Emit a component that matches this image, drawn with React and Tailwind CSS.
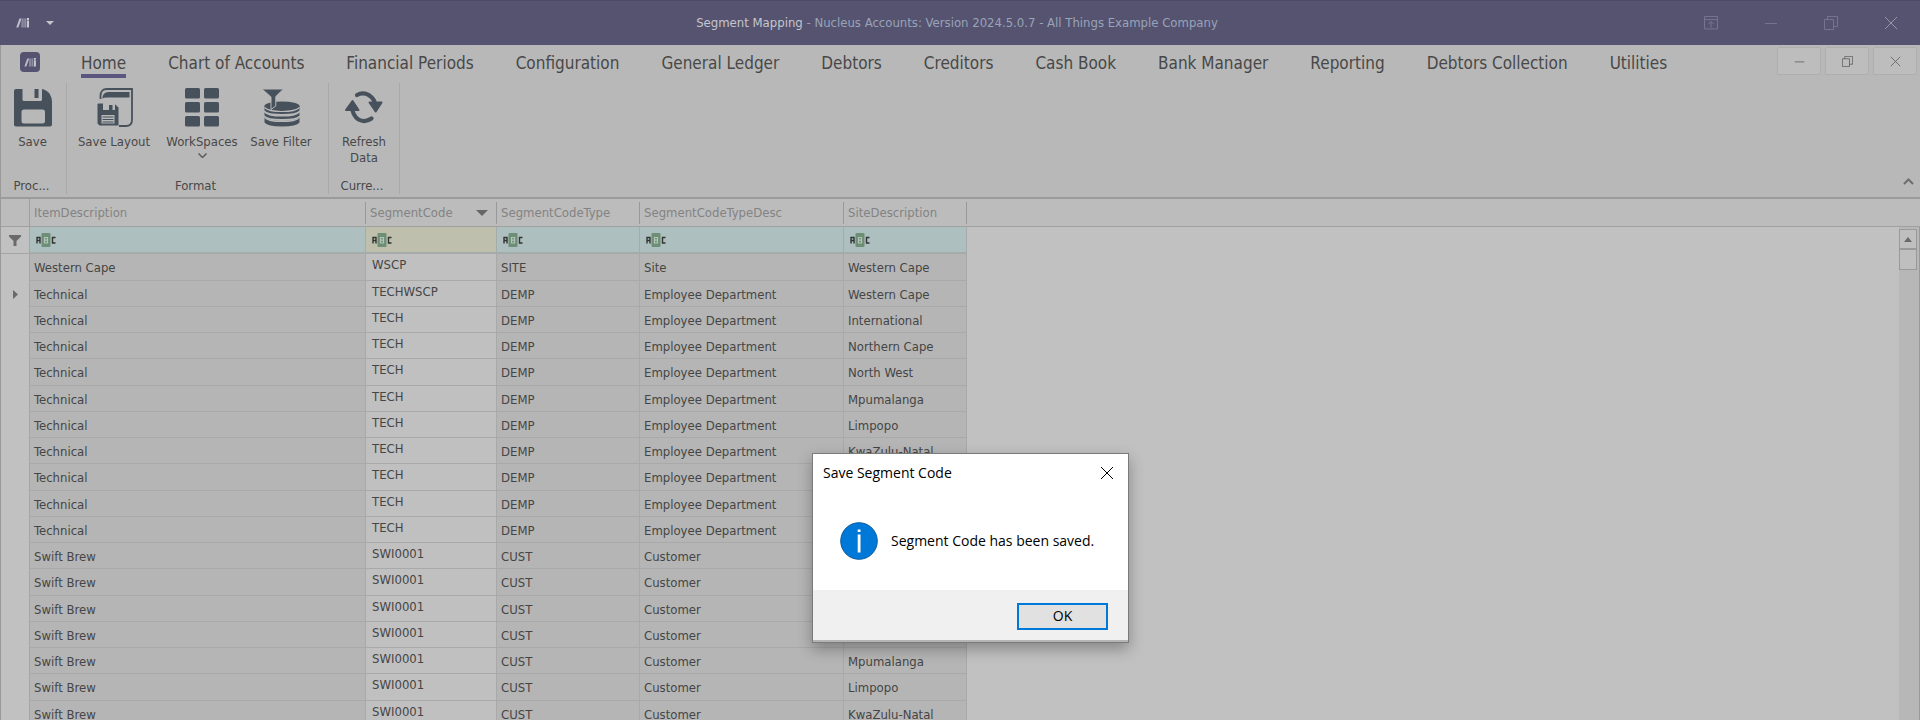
import React from "react";

const TABS = [
  "Home",
  "Chart of Accounts",
  "Financial Periods",
  "Configuration",
  "General Ledger",
  "Debtors",
  "Creditors",
  "Cash Book",
  "Bank Manager",
  "Reporting",
  "Debtors Collection",
  "Utilities",
];

const COLUMNS = [
  "ItemDescription",
  "SegmentCode",
  "SegmentCodeType",
  "SegmentCodeTypeDesc",
  "SiteDescription",
];

const SITES = [
  "Western Cape",
  "International",
  "Northern Cape",
  "North West",
  "Mpumalanga",
  "Limpopo",
  "KwaZulu-Natal",
  "Gauteng",
  "Free State",
  "Eastern Cape",
];

const ROWS = [
  ["Western Cape", "WSCP", "SITE", "Site", "Western Cape"],
  ...SITES.map((site, i) => [
    "Technical",
    i === 0 ? "TECHWSCP" : "TECH",
    "DEMP",
    "Employee Department",
    site,
  ]),
  ...SITES.slice(0, 7).map((site) => ["Swift Brew", "SWI0001", "CUST", "Customer", site]),
];

function Mark({ className }) {
  return (
    <svg className={className} viewBox="0 0 14 10" aria-hidden="true">
      <path d="M3.4 0.500h2.200L2.400 9.500H0.200z" fill="#bdbdc8" />
      <path d="M5.600 0.500h2.200v9H5.200z" fill="#8a889e" />
      <path d="M8.200 0.500h1.800v9H8.200z" fill="#8f8da2" />
      <path d="M10.800 0h2.200v2h-2.200zM10.800 2.500h2.200v7h-2.200z" fill="#c9c9d2" />
    </svg>
  );
}

function SaveIcon() {
  return (
    <svg className="h-[39px] w-[38px]" viewBox="0 0 38 39" fill="#47515c" aria-hidden="true">
      <path
        fillRule="evenodd"
        d="M2 1h6.5v10.5q0 1.5 1.5 1.5h16.500q1.500 0 1.500-1.500V1q4 0.500 7.500 4.500Q38 9.500 38 14v22.500q0 2-2 2H2q-2 0-2-2V3q0-2 2-2zM10 21.500q-2.500 0-2.500 2.500v9q0 2.500 2.500 2.500h18.500q2.500 0 2.500-2.500v-9q0-2.500-2.500-2.500z"
      />
      <rect x="20.500" y="1" width="4" height="9" />
    </svg>
  );
}

function SaveLayoutIcon() {
  return (
    <svg className="h-[39px] w-[38px]" viewBox="-2 0 38 39" aria-hidden="true">
      <path
        d="M3.500 11V8Q3.500 1 10 1H35V32q0 6-6 6H22"
        fill="none"
        stroke="#47515c"
        strokeWidth="1.800"
      />
      <path d="M5.500 10.500q0-6.500 6-6.500H32.500V9.500H9.500Q7 9.500 5.500 10.500z" fill="#47515c" />
      <path
        fillRule="evenodd"
        d="M1.500 15.500H6v6.500h12v-5.800l3.500 3.300V37.500H2.500L0.500 35.500V16zM4.500 27v8.500h13V27z"
        fill="#47515c"
      />
      <path d="M12 17h3.500v5H12z" fill="#47515c" />
      <path d="M5.500 29h11M5.500 31.500h11M5.500 34h11" stroke="#47515c" strokeWidth="1.200" />
    </svg>
  );
}

function WorkspacesIcon() {
  return (
    <svg className="h-[39px] w-[38px]" viewBox="0 0 38 39" fill="#47515c" aria-hidden="true">
      {[0, 14, 28].map((y) => (
        <g key={y}>
          <rect x="2" y={y} width="15" height="10.500" rx="1.500" />
          <rect x="21" y={y} width="15" height="10.500" rx="1.500" />
        </g>
      ))}
    </svg>
  );
}

function SaveFilterIcon() {
  return (
    <svg className="h-[39px] w-[38px]" viewBox="0 0 38 39" aria-hidden="true">
      <g fill="#47515c">
        <ellipse cx="20" cy="18" rx="17.500" ry="4.500" />
        <path d="M2.500 18h35v4.500q-3 3.500-17.500 3.500T2.500 22.500z" />
        <path d="M2.500 24q4 4 17.500 4t17.500-4v3.500q-3 3.500-17.500 3.500T2.500 27.500z" />
        <path d="M2.500 29q4 4 17.500 4t17.500-4v5.500q-3 4-17.500 4t-17.500-4z" />
      </g>
      <path
        d="M2.500 19.500q4 4 17.500 4t17.500-4M2.500 24q4 4 17.500 4t17.500-4M2.500 29.500q4 4 17.500 4t17.500-4"
        fill="none"
        stroke="#b8b8b8"
        strokeWidth="1.200"
      />
      <path
        d="M0 1h21.500L13.800 8.500V18L9 21.500V9z"
        fill="#47515c"
        stroke="#b8b8b8"
        strokeWidth="1"
      />
    </svg>
  );
}

function RefreshIcon() {
  return (
    <svg className="h-[39px] w-[38px]" viewBox="0 0 38 39" aria-hidden="true">
      <g fill="none" stroke="#47515c" strokeWidth="4.200" strokeLinecap="round">
        <path d="M12 7Q18 3.800 24 7.200Q30 11 30.500 18" />
        <path d="M26.500 30.500Q20 35 13.500 31.500Q7.500 27.500 7 19" />
      </g>
      <path
        d="M24.500 14.500h12l-5.800 9zM1 22l6.500-9 6 9z"
        fill="#47515c"
        stroke="#47515c"
        strokeWidth="2"
        strokeLinejoin="round"
      />
    </svg>
  );
}

function RibbonButton({ icon, children, className }) {
  return (
    <button type="button" className={`flex flex-col items-center ${className}`}>
      {icon}
      <span className="mt-[7px] block text-center">{children}</span>
    </button>
  );
}

function RibbonGroup({ label, className, children }) {
  return (
    <section
      className={`flex h-[111px] flex-col border-r border-[#a9a9a9] ${className}`}
      aria-label={label}
    >
      <div className="flex flex-1 items-start pt-[5px]">{children}</div>
      <div className="pr-1 text-center">{label}</div>
    </section>
  );
}

function MinimizeGlyph({ className }) {
  return (
    <svg className={className} viewBox="0 0 14 14" fill="none" stroke="currentColor" aria-hidden="true">
      <path d="M1 7.500h12" />
    </svg>
  );
}

function RestoreGlyph({ className }) {
  return (
    <svg className={className} viewBox="0 0 14 14" fill="none" stroke="currentColor" aria-hidden="true">
      <path d="M0.500 3.500h9v10h-9zM3.500 3.500v-3h10v10h-4" />
    </svg>
  );
}

function CloseGlyph({ className }) {
  return (
    <svg className={className} viewBox="0 0 14 14" fill="none" stroke="currentColor" aria-hidden="true">
      <path d="M1 1l12 12M13 1L1 13" />
    </svg>
  );
}

function TitleBar() {
  return (
    <header className="flex h-[45px] shrink-0 items-center border-t border-[#4c4a62] bg-[#555370] text-[#76748c]">
      <div className="flex flex-1 items-center gap-4 pl-4">
        <Mark className="h-[10px] w-[14px]" />
        <button type="button" aria-label="Customise quick access toolbar">
          <svg className="h-1 w-2" viewBox="0 0 8 4" fill="#c4c4cc" aria-hidden="true">
            <path d="M0 0h8L4 4z" />
          </svg>
        </button>
      </div>
      <h1 className="text-[13px] text-[#98a3b8]">
        <span className="text-[#c6c6cc]">Segment Mapping</span> - Nucleus Accounts: Version
        2024.5.0.7 - All Things Example Company
      </h1>
      <div className="flex flex-1 items-center justify-end gap-[46px] pr-[22px]">
        <button type="button" aria-label="Ribbon display options">
          <svg
            className="block size-[14px]"
            viewBox="0 0 14 14"
            fill="none"
            stroke="currentColor"
            aria-hidden="true"
          >
            <path d="M0.500 0.500h13v12.500h-13zM0.500 3.500h13M7 12V5.500M4.500 8L7 5.500 9.500 8" />
          </svg>
        </button>
        <button type="button" aria-label="Minimize">
          <MinimizeGlyph className="block size-[14px]" />
        </button>
        <button type="button" aria-label="Restore">
          <RestoreGlyph className="block size-[14px]" />
        </button>
        <button type="button" aria-label="Close" className="text-[#9897a6]">
          <CloseGlyph className="block size-[14px]" />
        </button>
      </div>
    </header>
  );
}

function TabBar() {
  const child =
    "flex h-[28px] w-[44px] items-center justify-center rounded-[2px] border border-[#aeaeae] bg-[#bdbdbd] text-[#5c5c5c]";
  return (
    <nav className="flex h-[38px] shrink-0 items-start" aria-label="Ribbon tabs">
      <button
        type="button"
        aria-label="Application menu"
        className="mt-[7px] mr-[41px] ml-[19px] flex size-5 items-center justify-center rounded-[4px] bg-[#555370]"
      >
        <Mark className="h-[9px] w-[13px]" />
      </button>
      <div className="flex gap-[42px] text-[17px] leading-[20px]">
        {TABS.map((tab, i) => (
          <a
            key={tab}
            href="#"
            aria-current={i === 0 ? "page" : undefined}
            className={`mt-2 border-b-4 pb-px whitespace-nowrap ${
              i === 0 ? "border-[#5b5680]" : "border-transparent"
            }`}
          >
            {tab}
          </a>
        ))}
      </div>
      <div className="mt-[2px] ml-auto flex gap-1 pr-[3px]">
        <button type="button" aria-label="Minimize document" className={child}>
          <MinimizeGlyph className="size-[11px]" />
        </button>
        <button type="button" aria-label="Restore document" className={child}>
          <RestoreGlyph className="size-[11px]" />
        </button>
        <button type="button" aria-label="Close document" className={child}>
          <CloseGlyph className="size-[11px]" />
        </button>
      </div>
    </nav>
  );
}

function Ribbon() {
  return (
    <div className="flex h-[116px] shrink-0 items-start border-b-2 border-[#9b9b9b] text-[13px] leading-[16px]">
      <RibbonGroup label="Proc..." className="w-[66px]">
        <RibbonButton className="w-[63px]" icon={<SaveIcon />}>
          Save
        </RibbonButton>
      </RibbonGroup>
      <RibbonGroup label="Format" className="w-[262px]">
        <RibbonButton className="ml-[3px] w-[88px]" icon={<SaveLayoutIcon />}>
          Save Layout
        </RibbonButton>
        <RibbonButton className="w-[88px]" icon={<WorkspacesIcon />}>
          WorkSpaces
          <svg
            className="mx-auto mt-[3px] h-[5px] w-[9px]"
            viewBox="0 0 9 5"
            fill="none"
            stroke="#5c5c5c"
            strokeWidth="1.500"
            aria-hidden="true"
          >
            <path d="M0.500 0.500l4 4 4-4" />
          </svg>
        </RibbonButton>
        <RibbonButton className="w-[70px]" icon={<SaveFilterIcon />}>
          Save Filter
        </RibbonButton>
      </RibbonGroup>
      <RibbonGroup label="Curre..." className="w-[71px]">
        <RibbonButton className="w-[70px]" icon={<RefreshIcon />}>
          Refresh
          <br />
          Data
        </RibbonButton>
      </RibbonGroup>
      <button type="button" aria-label="Collapse ribbon" className="mr-[6px] mb-[12px] ml-auto self-end">
        <svg
          className="block h-[7px] w-[11px]"
          viewBox="0 0 11 7"
          fill="none"
          stroke="#6e6e6e"
          strokeWidth="2"
          aria-hidden="true"
        >
          <path d="M1 6l4.500-4.500L10 6" />
        </svg>
      </button>
    </div>
  );
}

function ContainsBadge() {
  return (
    <svg className="h-[14px] w-5" viewBox="0 0 20 14" fill="none" aria-hidden="true">
      <path d="M1 10.500V4.500h3v6M1 7.500h3" stroke="#333" strokeWidth="1.400" />
      <rect x="5.500" y="0" width="9" height="14" rx="1" fill="#6d8f76" />
      <path d="M8.500 4.500h3v5.500h-3zM8.500 7.200h3" stroke="#b4c4b8" strokeWidth="1.200" />
      <path d="M19.500 4.500h-3v5.500h3" stroke="#333" strokeWidth="1.400" />
    </svg>
  );
}

function Grid() {
  return (
    <div className="flex min-h-0 flex-1 bg-[linear-gradient(#bcbcbc_27px,#a0a0a0_27px,#a0a0a0_28px,#c1c1c1_28px)]">
      <div className="min-w-0 flex-1 overflow-hidden">
        <table className="w-[966px] table-fixed border-separate border-spacing-0 text-left text-[13px] leading-[16px]">
          <colgroup>
            <col className="w-[29px]" />
            <col className="w-[336px]" />
            <col className="w-[131px]" />
            <col className="w-[143px]" />
            <col className="w-[204px]" />
            <col className="w-[123px]" />
          </colgroup>
          <thead>
            <tr className="h-[28px] text-[#838383]">
              <td className="border-r border-b border-[#a0a0a0] p-0" />
              {COLUMNS.map((name, i) => (
                <th key={name} scope="col" className="border-b border-[#a0a0a0] p-0 font-normal">
                  <div className="flex h-[22px] items-center justify-between border-r border-[#999] pr-2 pl-1">
                    {name}
                    {i === 1 && (
                      <svg className="h-[6px] w-3" viewBox="0 0 12 6" fill="#666" aria-hidden="true">
                        <path d="M0 0h12L6 6z" />
                      </svg>
                    )}
                  </div>
                </th>
              ))}
            </tr>
            <tr className="h-[27px]">
              <td className="border-r border-b border-[#a5a5a5] p-0">
                <svg className="mx-auto h-[11px] w-3" viewBox="0 0 12 11" fill="#6a6a6a" aria-hidden="true">
                  <path d="M0 0h12v1.500L7.500 6v5h-3V6L0 1.500z" />
                </svg>
              </td>
              {COLUMNS.map((name, i) => (
                <td
                  key={name}
                  className={`border-r border-b-2 border-[#a5abab] p-0 ${
                    i === 1 ? "bg-[#bfbfae]" : "bg-[#aebfbf]"
                  }`}
                >
                  <label className="flex items-center pl-[6px]">
                    <ContainsBadge />
                    <input
                      type="text"
                      aria-label={`Filter ${name}`}
                      className="h-5 w-0 min-w-0 flex-1 bg-transparent px-1 outline-none"
                    />
                  </label>
                </td>
              ))}
            </tr>
          </thead>
          <tbody className="text-[#454545]">
            {ROWS.map((row, r) => (
              <tr key={r} className="h-[26px] [&:nth-child(4n+1)]:h-[27px]">
                <td className="border-r border-[#a5a5a5] p-0">
                  {r === 1 && (
                    <svg className="mx-auto h-[9px] w-[5px]" viewBox="0 0 5 9" fill="#6a6a6a" aria-hidden="true">
                      <path d="M0 0l5 4.500L0 9z" />
                    </svg>
                  )}
                </td>
                {row.map((value, c) => (
                  <td
                    key={c}
                    className={`border-r border-b border-[#a9a9a9] whitespace-nowrap ${
                      c === 1 ? "bg-[#c0c0c0] pt-0 pb-1 pl-[6px]" : "bg-[#b5b5b5] pt-[2px] pb-0 pl-1"
                    }`}
                  >
                    {value}
                  </td>
                ))}
              </tr>
            ))}
          </tbody>
        </table>
      </div>
      <div className="mt-[28px] flex w-[21px] flex-col border-r border-[#999] bg-[#b7b7b7] pt-[2px]">
        <button
          type="button"
          aria-label="Scroll up"
          className="mr-[2px] flex h-[20px] items-center justify-center border border-[#999] bg-[#bfbfbf]"
        >
          <svg className="h-[5px] w-2" viewBox="0 0 8 5" fill="#6a6a6a" aria-hidden="true">
            <path d="M4 0l4 5H0z" />
          </svg>
        </button>
        <div className="mr-[2px] h-[21px] border border-[#999] bg-[#bfbfbf]" />
      </div>
    </div>
  );
}

function SaveDialog() {
  return (
    <div
      role="dialog"
      aria-labelledby="dialog-title"
      className="absolute top-[453px] left-[812px] flex w-[317px] flex-col border border-[#7a7a7a] bg-white font-['Open_Sans','Noto_Sans',sans-serif] text-[14px] leading-[20px] text-black shadow-[0_6px_14px_rgba(0,0,0,0.3)]"
    >
      <div className="flex h-[38px] items-center justify-between pr-[14px] pl-[10px]">
        <h2 id="dialog-title">Save Segment Code</h2>
        <button type="button" aria-label="Close dialog">
          <CloseGlyph className="block size-[14px]" />
        </button>
      </div>
      <div className="flex h-[98px] items-center gap-[13px] pl-[27px]">
        <svg className="size-[38px]" viewBox="0 0 38 38" aria-hidden="true">
          <circle cx="19" cy="19" r="18.300" fill="#0078d7" stroke="#0b5fa5" strokeWidth="1" />
          <path d="M17.700 7.500h2.800v2.500h-2.800zM17.700 12.500h2.800v18h-2.800z" fill="#fff" />
        </svg>
        <p>Segment Code has been saved.</p>
      </div>
      <div className="flex h-[52px] items-center justify-end border-b-2 border-[#b5b5b5] bg-[#f0f0f0] pt-[2px] pr-[20px]">
        <button
          type="button"
          className="flex h-[27px] w-[91px] items-center justify-center border-2 border-[#0078d7] bg-[#e1e1e1]"
        >
          OK
        </button>
      </div>
    </div>
  );
}

export default function App() {
  return (
    <div className="relative flex h-screen flex-col overflow-hidden bg-[#b8b8b8] font-['DejaVu_Sans_Condensed','DejaVu_Sans',sans-serif] text-[#484848]">
      <TitleBar />
      <main className="flex min-h-0 flex-1 flex-col border-l border-[#999]">
        <TabBar />
        <Ribbon />
        <Grid />
      </main>
      <SaveDialog />
    </div>
  );
}
